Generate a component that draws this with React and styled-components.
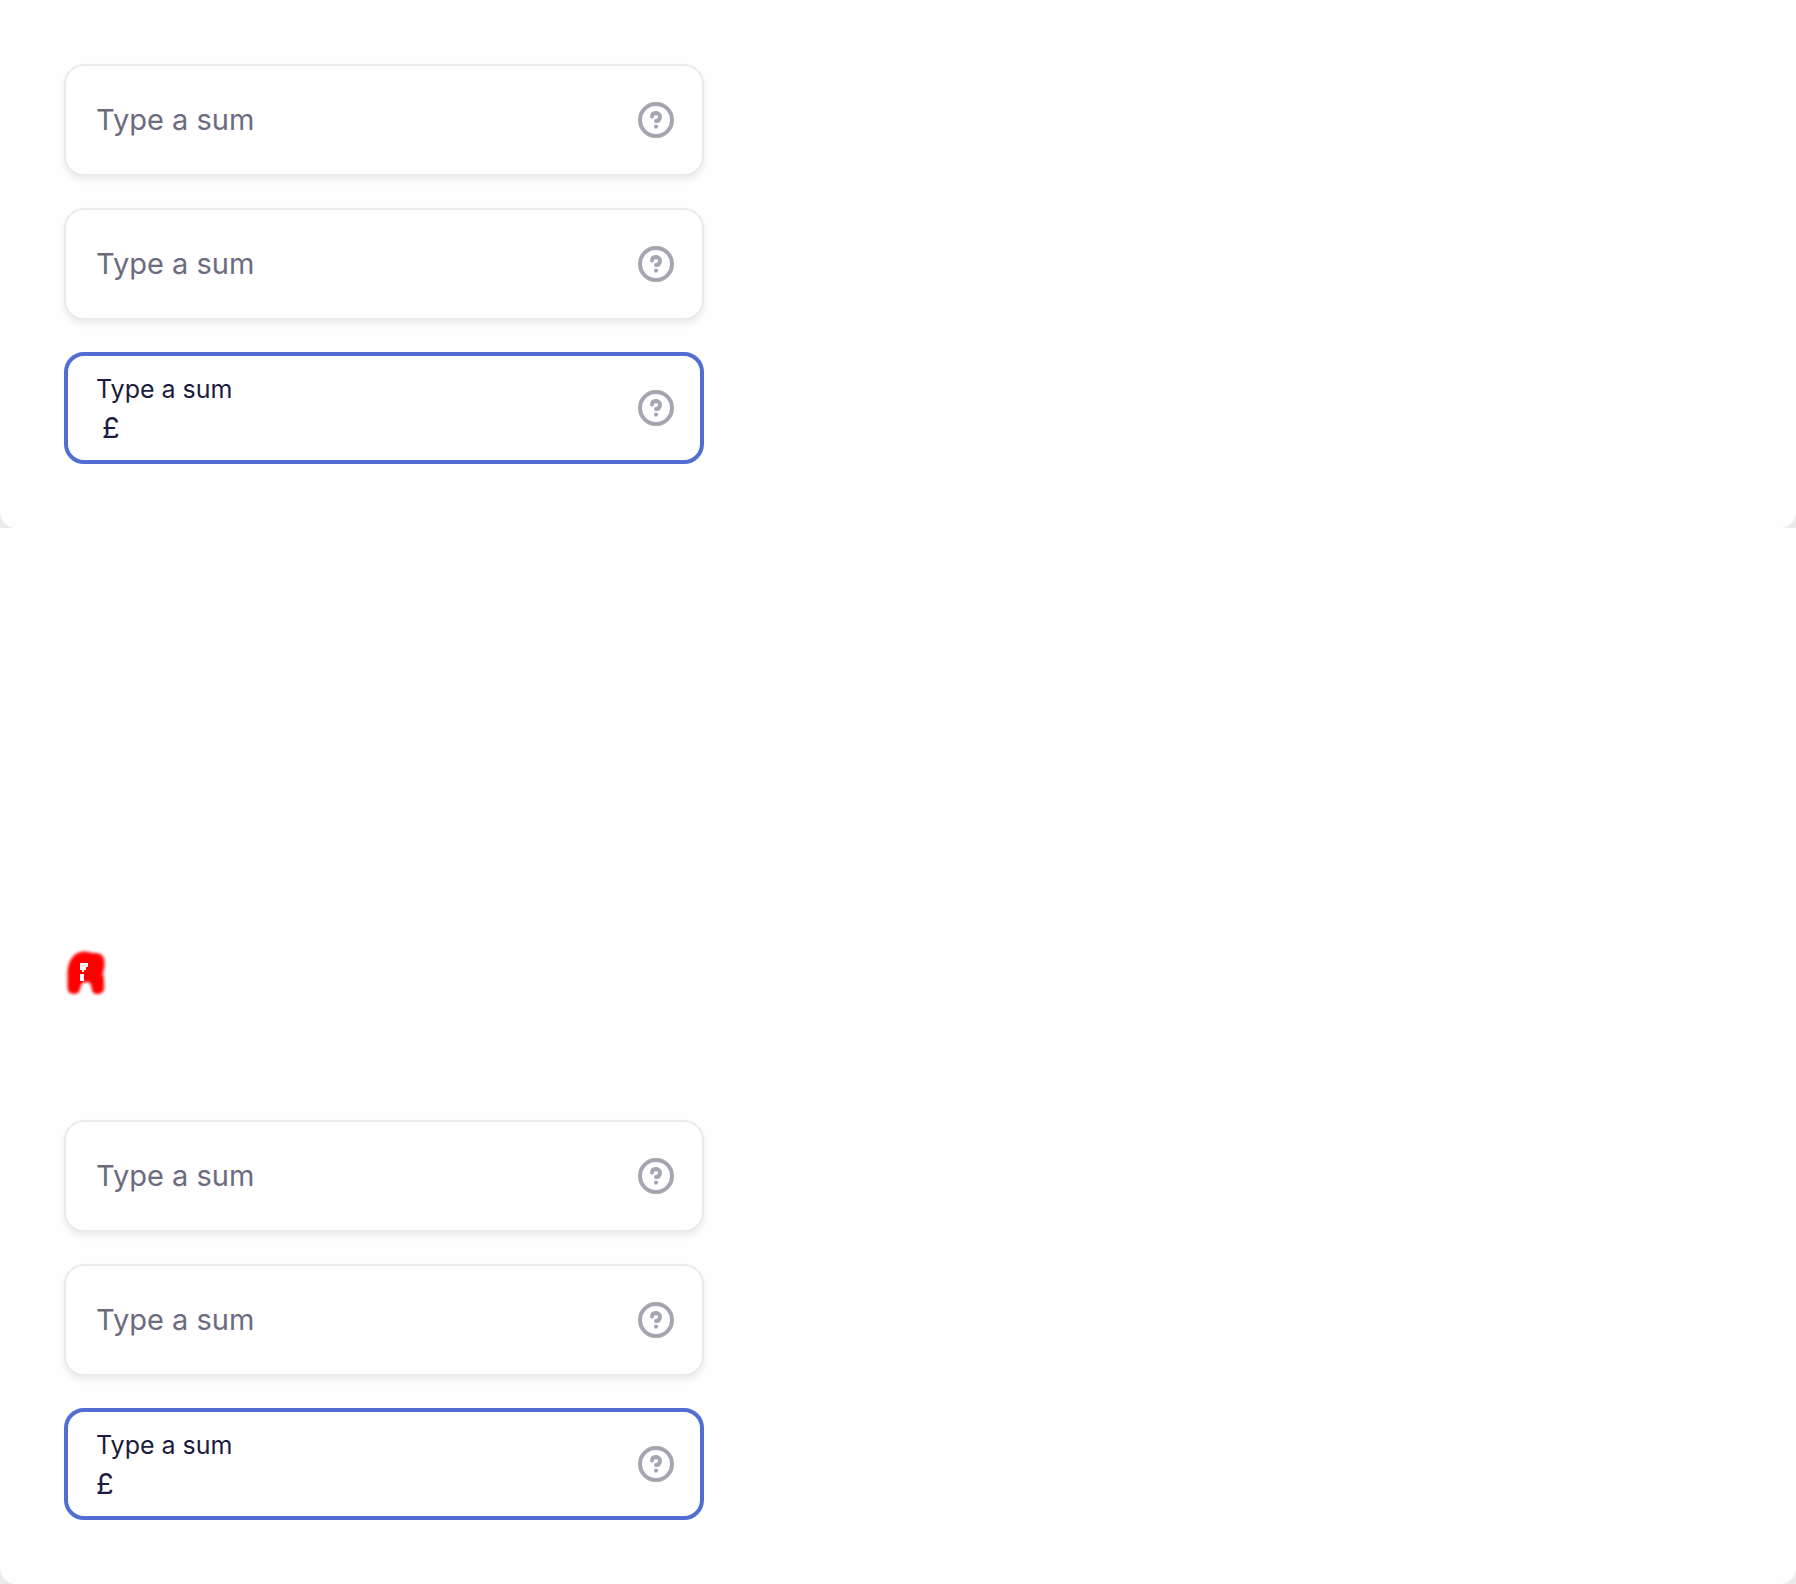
import React, { useId, useState } from "react";
import styled, { createGlobalStyle, css } from "styled-components";

const GlobalStyle = createGlobalStyle`
  *, *::before, *::after { box-sizing: border-box; }
  body {
    margin: 0;
    background: #fefefe;
    font-family: Inter, "Liberation Sans", sans-serif;
    color: #1a1b3d;
  }
`;

const Page = styled.main`
  display: flex;
  flex-direction: column;
`;

const PanelBackdrop = styled.div`
  background: #ebebeb;
`;

const Panel = styled.section`
  display: flex;
  flex-direction: column;
  gap: 32px;
  padding: 64px;
  background: #fefefe;
  border-radius: 0 0 16px 16px;
`;

const Break = styled.div`
  display: flex;
  align-items: flex-end;
  height: 528px;
  padding: 60px 64px;
`;

const Field = styled.div`
  display: flex;
  align-items: center;
  gap: 16px;
  width: 100%;
  max-width: 640px;
  height: 112px;
  padding: 0 28px 0 30px;
  background: #fff;
  border: 2px solid #ebebeb;
  border-radius: 20px;
  box-shadow: 0 4px 6px rgba(0, 0, 0, 0.08);
  ${(p) =>
    p.$active &&
    css`
      padding: 0 26px 0 28px;
      border: 4px solid #526ed3;
      box-shadow: none;
    `}
`;

const FieldBody = styled.div`
  display: flex;
  flex: 1;
  flex-direction: column;
  min-width: 0;
`;

const Label = styled.label`
  font-size: 25px;
  line-height: 40px;
`;

const SumInput = styled.input`
  width: 100%;
  height: 38px;
  padding: 0 0 0 ${(p) => (p.$indent ? "6px" : "0")};
  border: 0;
  outline: 0;
  background: transparent;
  font: inherit;
  font-size: 29px;
  line-height: 38px;
  color: #1a1b3d;
  &::placeholder {
    color: #6b6b80;
    opacity: 1;
  }
`;

const HelpButton = styled.button`
  display: flex;
  flex: none;
  padding: 0;
  border: 0;
  background: none;
  color: #a4a5b2;
  cursor: pointer;
`;

function HelpIcon() {
  return (
    <svg width="36" height="36" viewBox="0 0 36 36" fill="none" aria-hidden="true">
      <circle cx="18" cy="18" r="16" stroke="currentColor" strokeWidth="4" />
      <path
        d="M14 14.6C14.2 12.4 15.8 11 18 11C20.3 11 22 12.7 22 15C22 17.5 20.2 19 18 19"
        stroke="currentColor"
        strokeWidth="4"
        strokeLinecap="round"
      />
      <circle cx="18" cy="24.6" r="2.1" fill="currentColor" />
    </svg>
  );
}

function RedMark() {
  return (
    <svg width="44" height="48" viewBox="0 0 44 48" aria-hidden="true">
      <defs>
        <filter id="mark-soft" x="-20%" y="-20%" width="140%" height="140%">
          <feGaussianBlur stdDeviation="1.7" />
        </filter>
      </defs>
      <path
        d="M3.5 40V27C3.5 15 8 4 20 3.5C24 3.5 26 5 31 5C38 5 40.5 9 40.5 15C40.5 20 39.5 23 38.5 26C40 28 40 32 40 36V40C40 44 37 46 33 46C28 46 28 42 27 37C26 33 19 33 17 37C16 43 15 46 10 46C6 46 3.5 43 3.5 40Z"
        fill="#f00"
        filter="url(#mark-soft)"
      />
      <path
        d="M16 15H24V19H22V22H20V24H18V22H16ZM18 24V26H20V33H16V26H18Z"
        fill="#fff"
        shapeRendering="crispEdges"
      />
      <path d="M18 17H22V19H18Z" fill="#ffdede" shapeRendering="crispEdges" />
    </svg>
  );
}

function SumField({ active, indent, initialValue = "" }) {
  const id = useId();
  const [value, setValue] = useState(initialValue);
  return (
    <Field $active={active}>
      <FieldBody>
        {active && <Label htmlFor={id}>Type a sum</Label>}
        <SumInput
          id={id}
          type="text"
          inputMode="decimal"
          $indent={indent}
          aria-label={active ? undefined : "Type a sum"}
          placeholder={active ? undefined : "Type a sum"}
          value={value}
          onChange={(e) => setValue(e.target.value)}
        />
      </FieldBody>
      <HelpButton type="button" aria-label="Help">
        <HelpIcon />
      </HelpButton>
    </Field>
  );
}

function SumPanel({ indent }) {
  return (
    <PanelBackdrop>
      <Panel>
        <SumField />
        <SumField />
        <SumField active indent={indent} initialValue="£" />
      </Panel>
    </PanelBackdrop>
  );
}

export default function App() {
  return (
    <>
      <GlobalStyle />
      <Page>
        <SumPanel indent />
        <Break>
          <RedMark />
        </Break>
        <SumPanel />
      </Page>
    </>
  );
}
